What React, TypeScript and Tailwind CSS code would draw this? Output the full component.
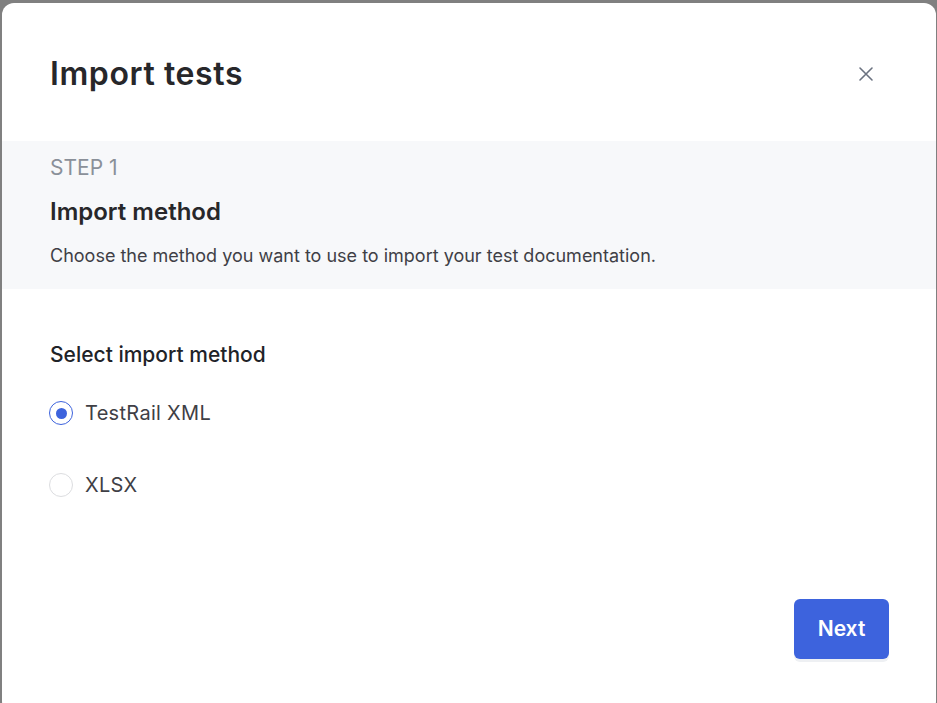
import { useState } from 'react'

export default function App() {
  const [method, setMethod] = useState('testrail')
  const options = [
    { id: 'testrail', label: 'TestRail XML' },
    { id: 'xlsx', label: 'XLSX' },
  ]
  return (
    <div className="h-[703px] w-[937px] overflow-hidden bg-[#808080] pl-[2px] pt-[3px]" style={{ fontFamily: 'Inter, "Noto Sans", sans-serif' }}>
      <div className="flex h-[710px] w-[934px] flex-col rounded-[12px] bg-white">
        <div className="flex h-[138px] items-center justify-between pl-[48px] pr-[62px] pt-[4px]">
          <h1 className="text-[32px] font-semibold tracking-[0.6px] text-[#27272a]">Import tests</h1>
          <button className="text-[#6b7280]">
            <svg width="16" height="16" viewBox="0 0 16 16" fill="none" stroke="currentColor" strokeWidth="1.6" strokeLinecap="round">
              <path d="M2 2l12 12M14 2L2 14" />
            </svg>
          </button>
        </div>
        <div className="h-[148px] bg-[#f7f8fa] px-[48px] pt-[13px]">
          <div className="text-[21px] leading-[28px] text-[#8a9099]">STEP 1</div>
          <h2 className="mt-[14px] text-[24px] font-semibold leading-[32px] text-[#27272a]">Import method</h2>
          <p className="mt-[15px] text-[18px] leading-[26px] text-[#3f3f46]">Choose the method you want to use to import your test documentation.</p>
        </div>
        <div className="flex flex-1 flex-col px-[48px] pt-[52px]">
          <div className="text-[21px] font-medium leading-[28px] text-[#1f2328]">Select import method</div>
          <div className="mt-[31px] flex flex-col gap-[46px]">
            {options.map((o) => (
              <label key={o.id} className="flex h-[26px] cursor-pointer items-center gap-[12px]" onClick={() => setMethod(o.id)}>
                <span className={`ml-[-1px] flex h-[24px] w-[24px] items-center justify-center rounded-full border ${method === o.id ? 'border-[#3d63dd]' : 'border-[#dcdde0]'}`}>
                  {method === o.id && <span className="h-[11px] w-[11px] rounded-full bg-[#3d63dd]" />}
                </span>
                <span className="text-[20px] leading-[26px] tracking-[0.3px] text-[#3f3f46]">{o.label}</span>
              </label>
            ))}
          </div>
          <div className="mt-[101px] flex justify-end">
            <button className="mr-[-1px] h-[60px] w-[95px] rounded-[6px] bg-[#3d63dd] text-[21px] font-semibold text-white shadow-[0_3px_0_#eef0f3]">Next</button>
          </div>
        </div>
      </div>
    </div>
  )
}
